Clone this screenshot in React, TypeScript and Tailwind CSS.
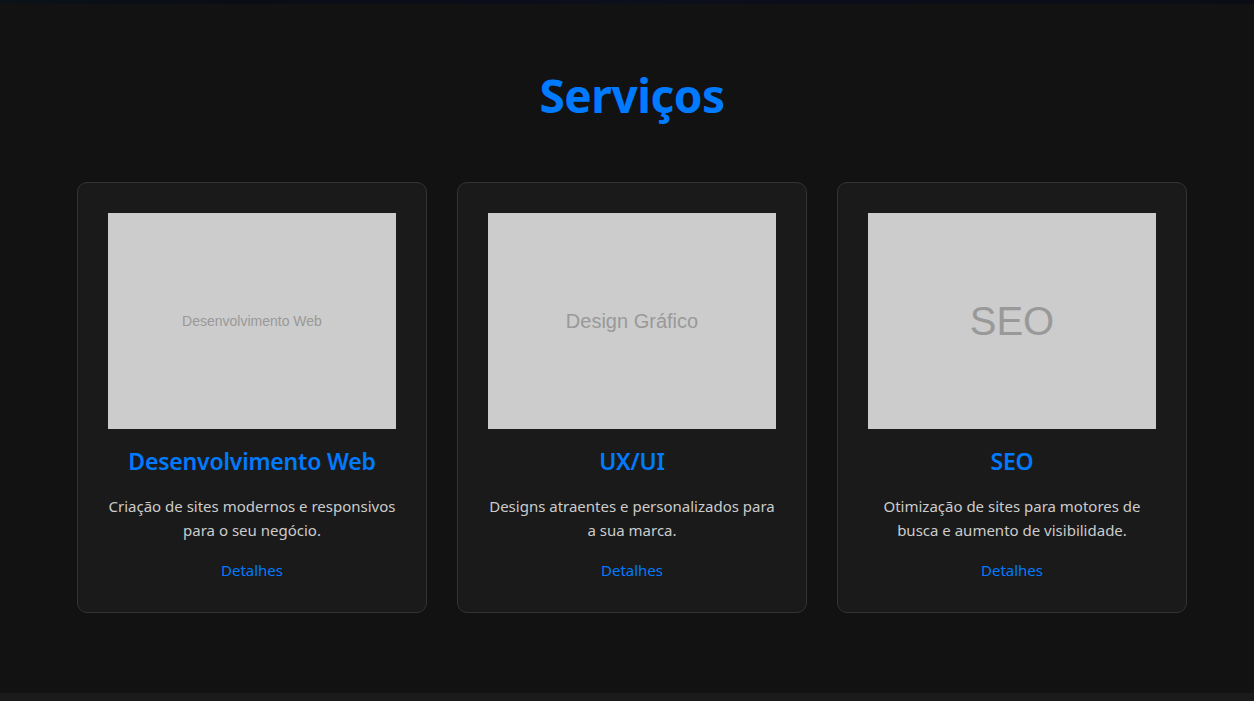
import React from 'react';

const services = [
  {
    title: 'Desenvolvimento Web',
    text: 'Criação de sites modernos e responsivos para o seu negócio.',
    label: 'Desenvolvimento Web',
    labelClass: 'text-[14px]',
  },
  {
    title: 'UX/UI',
    text: 'Designs atraentes e personalizados para a sua marca.',
    label: 'Design Gráfico',
    labelClass: 'text-[20px]',
  },
  {
    title: 'SEO',
    text: 'Otimização de sites para motores de busca e aumento de visibilidade.',
    label: 'SEO',
    labelClass: 'text-[40px]',
  },
];

const App = () => {
  return (
    <div className="min-h-[701px] bg-[#121212] font-['Noto_Sans',sans-serif]">
      <div className="h-1 bg-[linear-gradient(90deg,#0b1218,#0a0c16_20%,#0c0f1c_50%,#0a0c16)]" />

      <section className="pt-[64px] pb-[80px]">
        <div className="ml-[77px] w-[1110px]">
          <h2 className="text-center text-[46px] font-bold leading-[55px] tracking-[-0.5px] text-[#007bff] mb-[59px]">
            Serviços
          </h2>

          <div className="grid grid-cols-3 gap-[30px]">
            {services.map((s) => (
              <div
                key={s.title}
                className="flex flex-col items-center rounded-[10px] border border-[#333] bg-[#1a1a1a] p-[30px] text-center"
              >
                <div className="flex h-[216px] w-[288px] items-center justify-center bg-[#cccccc]">
                  <span className={`font-['Liberation_Sans',Arial,sans-serif] text-[#999999] ${s.labelClass}`}>
                    {s.label}
                  </span>
                </div>
                <h3 className="mt-[16px] text-[23px] font-semibold leading-[32px] tracking-[-0.2px] text-[#007bff]">
                  {s.title}
                </h3>
                <p className="mt-[17px] text-[15px] leading-[24px] text-[#cccccc]">{s.text}</p>
                <a href="#" className="mt-[16px] text-[15px] leading-[24px] text-[#007bff]">
                  Detalhes
                </a>
              </div>
            ))}
          </div>
        </div>
      </section>

      <div className="h-2 bg-[#1a1a1a]" />
    </div>
  );
};

export default App;
